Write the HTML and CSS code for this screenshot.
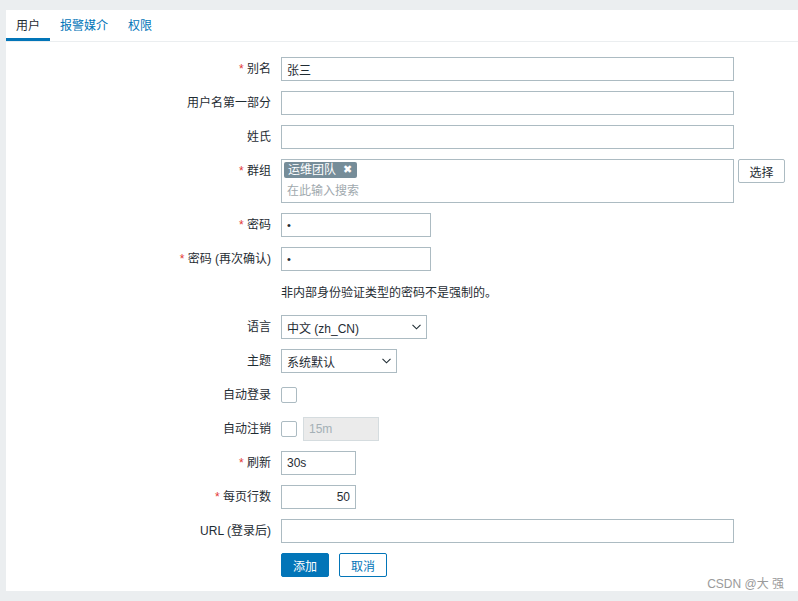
FILE: index.html
```html
<!DOCTYPE html>
<html lang="zh-CN">
<head>
<meta charset="utf-8">
<title>用户</title>
<link rel="stylesheet" href="styles.css">
</head>
<body>
<div class="panel">
  <nav class="tabs">
    <span class="tab active">用户</span>
    <span class="tab">报警媒介</span>
    <span class="tab">权限</span>
  </nav>
  <form class="form">
    <label class="lbl"><span class="req">*</span> 别名</label>
    <div class="field"><input class="inp w-full" type="text" value="张三"></div>

    <label class="lbl">用户名第一部分</label>
    <div class="field"><input class="inp w-full" type="text"></div>

    <label class="lbl">姓氏</label>
    <div class="field"><input class="inp w-full" type="text"></div>

    <label class="lbl"><span class="req">*</span> 群组</label>
    <div class="field group-row">
      <div class="multiselect">
        <div class="tags"><span class="tag">运维团队<span class="tag-x">✖</span></span></div>
        <input class="ms-input" type="text" placeholder="在此输入搜索">
      </div>
      <button type="button" class="btn-alt">选择</button>
    </div>

    <label class="lbl"><span class="req">*</span> 密码</label>
    <div class="field"><input class="inp w-pass pass" type="text" value="•"></div>

    <label class="lbl"><span class="req">*</span> 密码 (再次确认)</label>
    <div class="field"><input class="inp w-pass pass" type="text" value="•"></div>

    <div class="lbl"></div>
    <div class="field hint">非内部身份验证类型的密码不是强制的。</div>

    <label class="lbl">语言</label>
    <div class="field">
      <div class="select w-lang"><span>中文 (zh_CN)</span>
        <svg class="chev" width="9" height="6" viewBox="0 0 9 6"><path d="M0.5 0.8 L4.5 4.8 L8.5 0.8" fill="none" stroke="#1f2c33" stroke-width="1.1"/></svg>
      </div>
    </div>

    <label class="lbl">主题</label>
    <div class="field">
      <div class="select w-theme"><span>系统默认</span>
        <svg class="chev" width="9" height="6" viewBox="0 0 9 6"><path d="M0.5 0.8 L4.5 4.8 L8.5 0.8" fill="none" stroke="#1f2c33" stroke-width="1.1"/></svg>
      </div>
    </div>

    <label class="lbl">自动登录</label>
    <div class="field center"><span class="checkbox"></span></div>

    <label class="lbl">自动注销</label>
    <div class="field center"><span class="checkbox"></span><input class="inp w-short disabled" type="text" value="15m" disabled></div>

    <label class="lbl"><span class="req">*</span> 刷新</label>
    <div class="field"><input class="inp w-short2" type="text" value="30s"></div>

    <label class="lbl"><span class="req">*</span> 每页行数</label>
    <div class="field"><input class="inp w-short2 right" type="text" value="50"></div>

    <label class="lbl">URL (登录后)</label>
    <div class="field"><input class="inp w-full" type="text"></div>

    <div class="lbl"></div>
    <div class="field buttons">
      <button type="button" class="btn-primary">添加</button>
      <button type="button" class="btn-cancel">取消</button>
    </div>
  </form>
  <div class="watermark">CSDN @大 强</div>
</div>
</body>
</html>
```

FILE: styles.css
```css
* { box-sizing: border-box; }

html, body {
  margin: 0;
  padding: 0;
  background: #ebeef0;
  font-family: "Liberation Sans", "Noto Sans CJK SC", Arial, sans-serif;
  font-size: 12px;
  color: #1f2c33;
}

.panel {
  position: relative;
  margin: 10px 0 0 6px;
  height: 581px;
  background: #ffffff;
}

.tabs {
  display: flex;
  border-bottom: 1px solid #ebeef0;
}

.tab {
  height: 31px;
  padding: 4px 10px 0;
  line-height: 24px;
  border-bottom: 3px solid transparent;
  color: #0275b8;
}

.tab.active {
  color: #1f2c33;
  border-bottom-color: #0275b8;
}

.form {
  display: grid;
  grid-template-columns: 265px 1fr;
  column-gap: 10px;
  row-gap: 10px;
  margin-top: 15px;
}

.lbl {
  text-align: right;
  line-height: 24px;
  min-height: 24px;
  white-space: nowrap;
}

.req {
  color: #e33734;
}

.field {
  min-height: 24px;
  display: flex;
  align-items: flex-start;
}

.field.center {
  align-items: center;
}

.inp {
  height: 24px;
  margin: 0;
  padding: 0 5px;
  border: 1px solid #acbbc2;
  border-radius: 0;
  background: #fff;
  font-family: inherit;
  font-size: 12px;
  color: #1f2c33;
  outline: none;
}

.pass { font-size: 11px; }

.w-full { width: 453px; }
.w-pass { width: 150px; }
.w-short { width: 76px; }
.w-short2 { width: 75px; }
.right { text-align: right; }

.inp.disabled {
  margin-left: 6px;
  background: #ebebeb;
  border-color: #d5dcdf;
  color: #a4b0b6;
}

.group-row {
  gap: 4px;
}

.multiselect {
  width: 453px;
  height: 44px;
  border: 1px solid #acbbc2;
  padding: 2px 2px 0;
}

.tags {
  display: flex;
}

.tag {
  display: inline-flex;
  align-items: center;
  height: 16px;
  padding: 0 5px 0 4px;
  background: #768d99;
  color: #fff;
  border-radius: 2px;
  line-height: 16px;
}

.tag-x {
  margin-left: 7px;
  font-size: 11px;
  font-family: "DejaVu Sans", sans-serif;
  font-weight: bold;
}

.ms-input {
  display: block;
  width: 100%;
  height: 22px;
  margin: 2px 0 0;
  padding: 0 3px;
  border: none;
  outline: none;
  font-family: inherit;
  font-size: 12px;
  color: #1f2c33;
  background: transparent;
}

.ms-input::placeholder {
  color: #9fa9ae;
}

.btn-alt {
  height: 24px;
  width: 47px;
  padding: 0;
  background: #fff;
  border: 1px solid #acbbc2;
  border-radius: 2px;
  font-family: inherit;
  font-size: 12px;
  color: #1f2c33;
}

.hint {
  line-height: 24px;
}

.select {
  height: 24px;
  display: flex;
  align-items: center;
  justify-content: space-between;
  padding: 0 5px;
  border: 1px solid #acbbc2;
  background: #fff;
}

.w-lang { width: 146px; }
.w-theme { width: 116px; }

.chev {
  display: block;
}

.checkbox {
  display: block;
  width: 16px;
  height: 16px;
  border: 1px solid #acbbc2;
  border-radius: 2px;
  background: #fff;
}

.buttons {
  gap: 10px;
}

.btn-primary,
.btn-cancel {
  height: 24px;
  width: 48px;
  padding: 0;
  border: 1px solid #0275b8;
  border-radius: 2px;
  font-family: inherit;
  font-size: 12px;
}

.btn-primary {
  background: #0275b8;
  color: #fff;
}

.btn-cancel {
  background: #fff;
  color: #0275b8;
}

.watermark {
  position: absolute;
  right: 14px;
  top: 564px;
  font-size: 12px;
  color: #9a9a9a;
  white-space: nowrap;
}
```
